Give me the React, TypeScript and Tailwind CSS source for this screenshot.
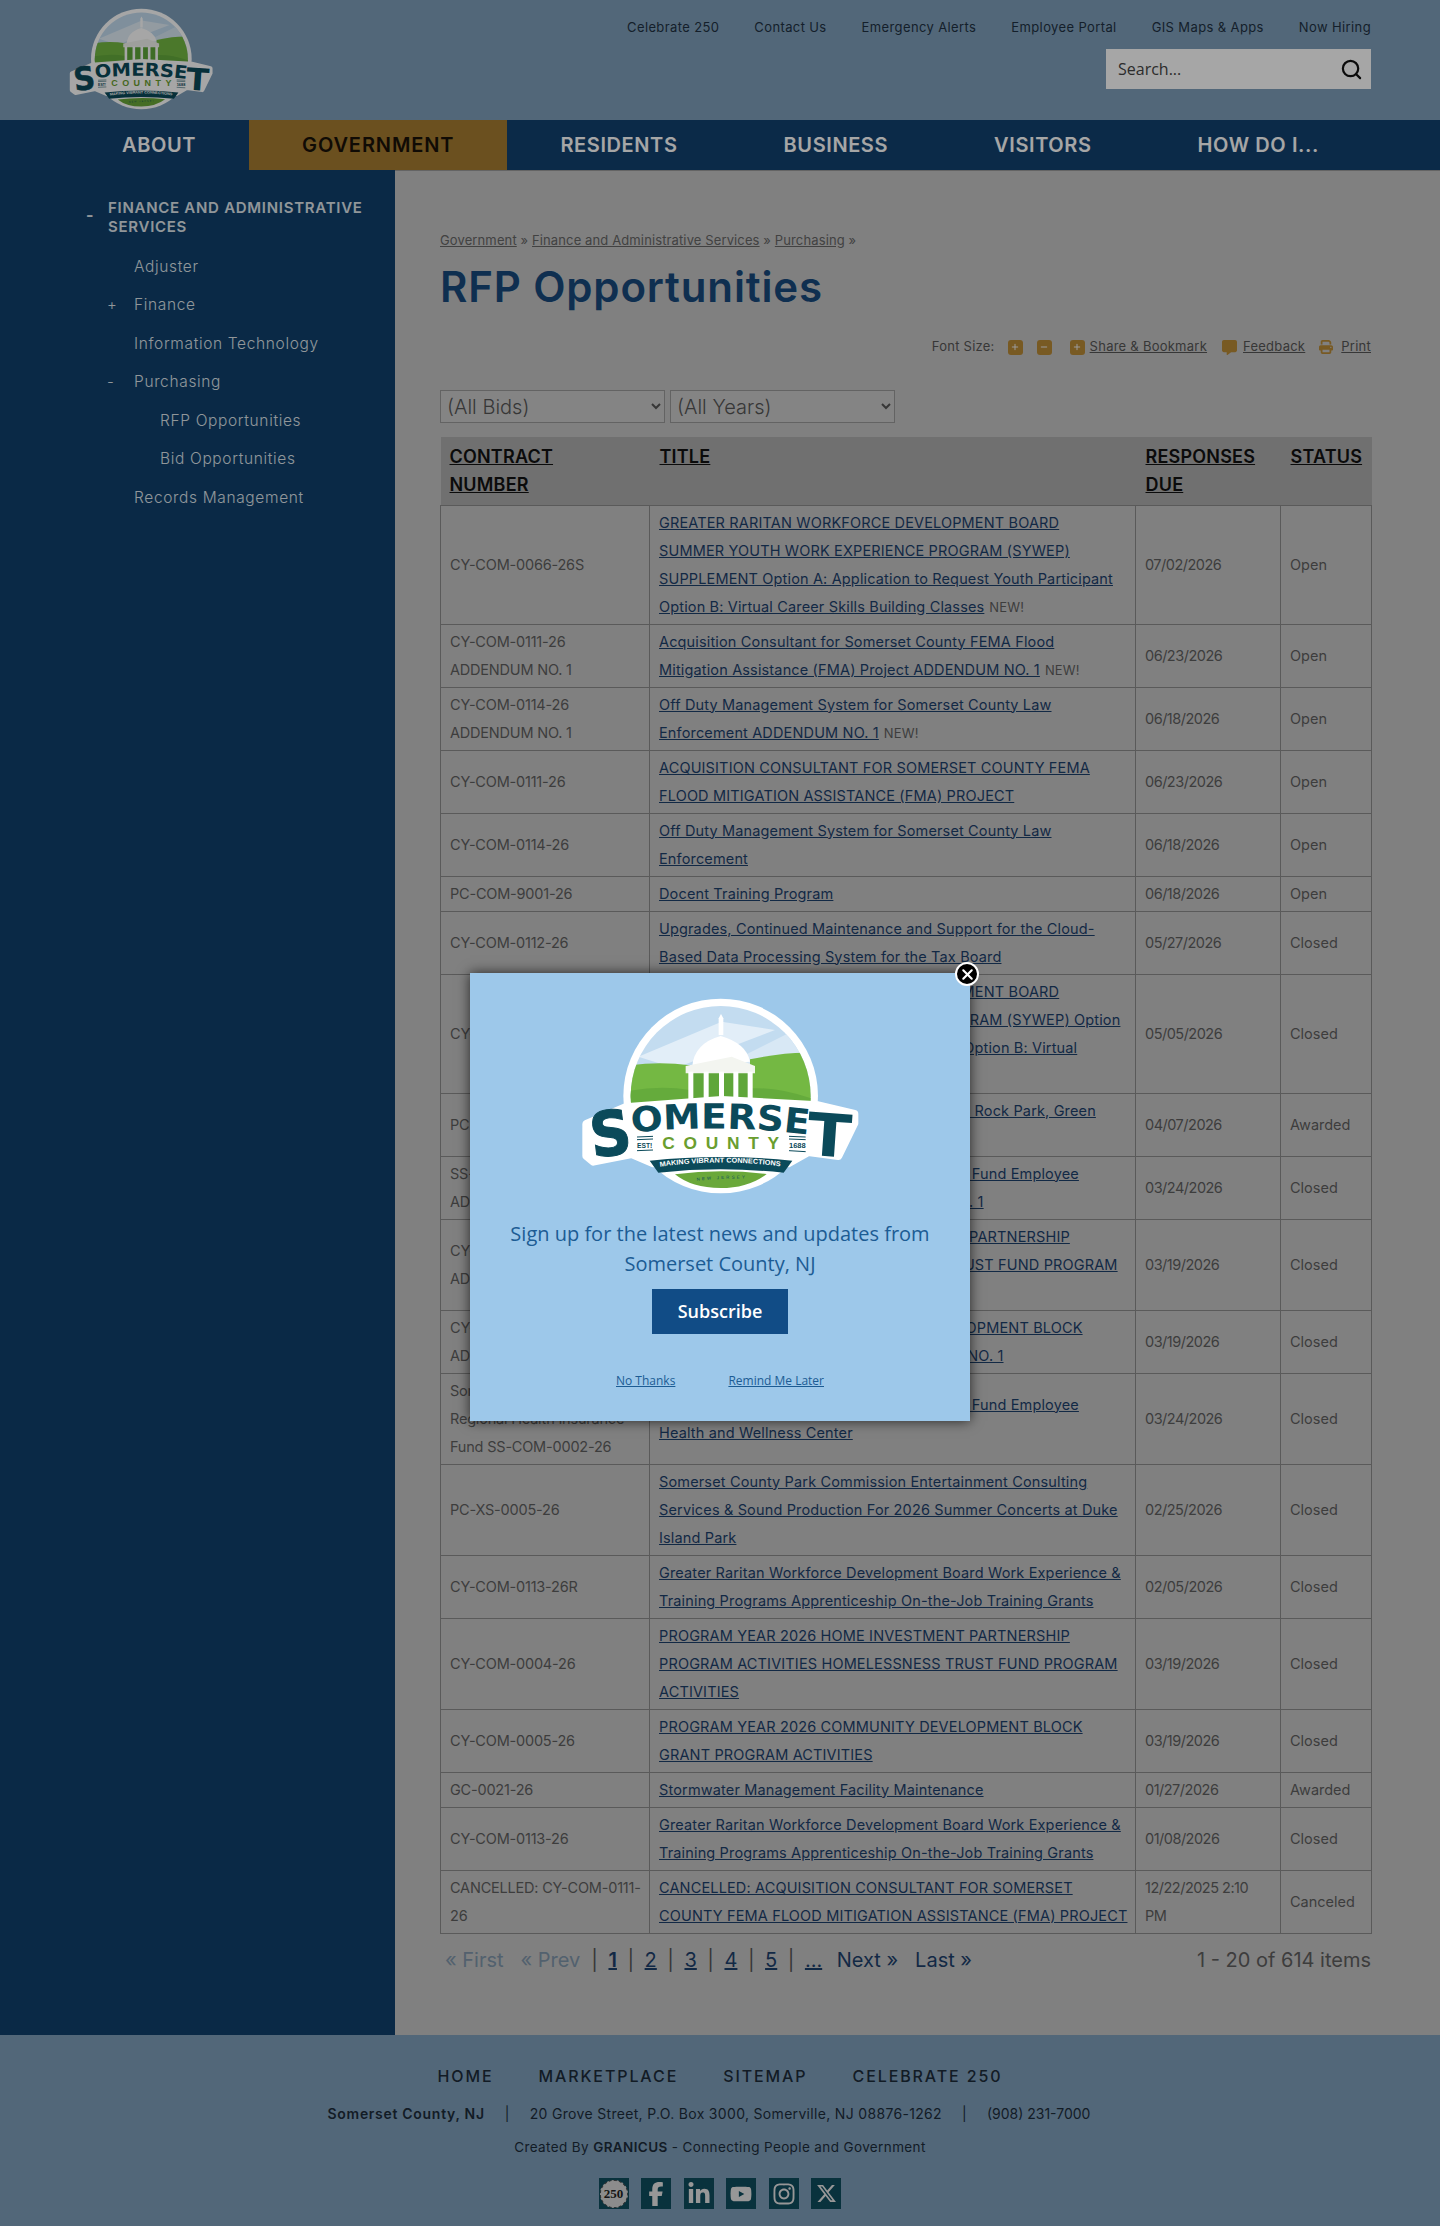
import { FaFacebookF, FaLinkedinIn, FaYoutube, FaInstagram, FaXTwitter, FaPrint, FaMessage, FaPlus, FaMinus, FaXmark } from "react-icons/fa6";
import { Search } from "lucide-react";

type Row = { id: string[]; title: string[]; isNew?: boolean; due: string[]; status: string };

const rows: Row[] = [
  { id: ["CY-COM-0066-26S"], title: ["GREATER RARITAN WORKFORCE DEVELOPMENT BOARD", "SUMMER YOUTH WORK EXPERIENCE PROGRAM (SYWEP)", "SUPPLEMENT Option A: Application to Request Youth Participant", "Option B: Virtual Career Skills Building Classes"], isNew: true, due: ["07/02/2026"], status: "Open" },
  { id: ["CY-COM-0111-26", "ADDENDUM NO. 1"], title: ["Acquisition Consultant for Somerset County FEMA Flood", "Mitigation Assistance (FMA) Project ADDENDUM NO. 1"], isNew: true, due: ["06/23/2026"], status: "Open" },
  { id: ["CY-COM-0114-26", "ADDENDUM NO. 1"], title: ["Off Duty Management System for Somerset County Law", "Enforcement ADDENDUM NO. 1"], isNew: true, due: ["06/18/2026"], status: "Open" },
  { id: ["CY-COM-0111-26"], title: ["ACQUISITION CONSULTANT FOR SOMERSET COUNTY FEMA", "FLOOD MITIGATION ASSISTANCE (FMA) PROJECT"], due: ["06/23/2026"], status: "Open" },
  { id: ["CY-COM-0114-26"], title: ["Off Duty Management System for Somerset County Law", "Enforcement"], due: ["06/18/2026"], status: "Open" },
  { id: ["PC-COM-9001-26"], title: ["Docent Training Program"], due: ["06/18/2026"], status: "Open" },
  { id: ["CY-COM-0112-26"], title: ["Upgrades, Continued Maintenance and Support for the Cloud-", "Based Data Processing System for the Tax Board"], due: ["05/27/2026"], status: "Closed" },
  { id: ["CY-COM-0066-26"], title: ["GREATER RARITAN WORKFORCE DEVELOPMENT BOARD", "SUMMER YOUTH WORK EXPERIENCE PROGRAM (SYWEP) Option", "A: Application to Request Youth Participant Option B: Virtual", "Career Skills Building Classes"], due: ["05/05/2026"], status: "Closed" },
  { id: ["PC-COM-0003-26"], title: ["Engineering Design Services for Washington Rock Park, Green", "Brook Improvements"], due: ["04/07/2026"], status: "Awarded" },
  { id: ["SS-COM-0002-26", "ADDENDUM NO. 1"], title: ["Somerset County Regional Health Insurance Fund Employee", "Health and Wellness Center ADDENDUM NO. 1"], due: ["03/24/2026"], status: "Closed" },
  { id: ["CY-COM-0004-26", "ADDENDUM NO. 1"], title: ["PROGRAM YEAR 2026 HOME INVESTMENT PARTNERSHIP", "PROGRAM ACTIVITIES HOMELESSNESS TRUST FUND PROGRAM", "ACTIVITIES ADDENDUM NO. 1"], due: ["03/19/2026"], status: "Closed" },
  { id: ["CY-COM-0005-26", "ADDENDUM NO. 1"], title: ["PROGRAM YEAR 2026 COMMUNITY DEVELOPMENT BLOCK", "GRANT PROGRAM ACTIVITIES ADDENDUM NO. 1"], due: ["03/19/2026"], status: "Closed" },
  { id: ["Somerset County", "Regional Health Insurance", "Fund SS-COM-0002-26"], title: ["Somerset County Regional Health Insurance Fund Employee", "Health and Wellness Center"], due: ["03/24/2026"], status: "Closed" },
  { id: ["PC-XS-0005-26"], title: ["Somerset County Park Commission Entertainment Consulting", "Services & Sound Production For 2026 Summer Concerts at Duke", "Island Park"], due: ["02/25/2026"], status: "Closed" },
  { id: ["CY-COM-0113-26R"], title: ["Greater Raritan Workforce Development Board Work Experience &", "Training Programs Apprenticeship On-the-Job Training Grants"], due: ["02/05/2026"], status: "Closed" },
  { id: ["CY-COM-0004-26"], title: ["PROGRAM YEAR 2026 HOME INVESTMENT PARTNERSHIP", "PROGRAM ACTIVITIES HOMELESSNESS TRUST FUND PROGRAM", "ACTIVITIES"], due: ["03/19/2026"], status: "Closed" },
  { id: ["CY-COM-0005-26"], title: ["PROGRAM YEAR 2026 COMMUNITY DEVELOPMENT BLOCK", "GRANT PROGRAM ACTIVITIES"], due: ["03/19/2026"], status: "Closed" },
  { id: ["GC-0021-26"], title: ["Stormwater Management Facility Maintenance"], due: ["01/27/2026"], status: "Awarded" },
  { id: ["CY-COM-0113-26"], title: ["Greater Raritan Workforce Development Board Work Experience &", "Training Programs Apprenticeship On-the-Job Training Grants"], due: ["01/08/2026"], status: "Closed" },
  { id: ["CANCELLED: CY-COM-0111-", "26"], title: ["CANCELLED: ACQUISITION CONSULTANT FOR SOMERSET", "COUNTY FEMA FLOOD MITIGATION ASSISTANCE (FMA) PROJECT"], due: ["12/22/2025 2:10", "PM"], status: "Canceled" },
];

const topLinks = ["Celebrate 250", "Contact Us", "Emergency Alerts", "Employee Portal", "GIS Maps & Apps", "Now Hiring"];
const navItems = ["ABOUT", "GOVERNMENT", "RESIDENTS", "BUSINESS", "VISITORS", "HOW DO I..."];

function Lines({ items }: { items: string[] }) {
  return (
    <>
      {items.map((t, i) => (
        <div key={i} className="whitespace-nowrap">{t}</div>
      ))}
    </>
  );
}

// county seal, drawn on the same grid for the header and the popup
function Logo({ prefix, className }: { prefix: string; className: string }) {
  const teal = "#0b4a5a";
  return (
    <svg viewBox="0 0 870 630" className={className}>
      <defs>
        <clipPath id={`${prefix}-c`}>
          <circle cx="437" cy="318" r="270" />
        </clipPath>
        <path id={`${prefix}-w`} d="M170 428 Q 435 400 702 434" />
        <path id={`${prefix}-b`} d="M255 530 Q 435 505 625 530" />
        <path id={`${prefix}-j`} d="M365 572 Q 435 565 515 566" />
      </defs>
      <circle cx="437" cy="318" r="292" fill="#fff" />
      <g clipPath={`url(#${prefix}-c)`}>
        <rect x="140" y="40" width="600" height="300" fill="#c3dcf0" />
        <path d="M190 200 L 440 95 L 600 120 L 300 235 Z" fill="#e2eef8" />
        <path d="M420 240 L 640 130 L 700 190 L 520 240 Z" fill="#d8e8f5" />
        <path d="M150 228 Q 250 212 345 226 L 345 340 L 150 340 Z" fill="#74b843" />
        <path d="M150 305 Q 250 285 345 300 L 345 340 L 150 340 Z" fill="#65ab3c" />
        <path d="M525 208 Q 620 188 690 188 L 735 340 L 525 340 Z" fill="#74b843" />
        <path d="M525 295 Q 620 290 735 335 L 525 340 Z" fill="#65ab3c" />
        <rect x="345" y="240" width="185" height="90" fill="#5fa63a" />
      </g>
      <path d="M431 135 L 431 85 L 438 72 L 445 85 L 445 135 Z" fill="#fff" />
      <path d="M352 228 Q 358 160 437 138 Q 515 160 525 215 Z" fill="#fff" />
      <path d="M332 228 L 470 200 L 540 228 L 540 250 L 332 250 Z" fill="#f3f5f0" />
      {[340, 386, 432, 475, 518].map((x) => (
        <rect key={x} x={x} y="245" width="15" height="85" fill="#fff" />
      ))}
      <path d="M34 402 L 150 352 L 440 330 L 730 346 L 838 372 L 838 400 L 790 498 L 700 486 L 640 520 L 235 520 L 170 492 L 55 515 L 34 498 Z" fill="#fff" stroke="#fff" strokeWidth="24" strokeLinejoin="round" />
      <text x="44" y="497" fontFamily="'DejaVu Sans', sans-serif" fontWeight="700" fontSize="186" fill={teal} stroke={teal} strokeWidth="3" textLength="124" lengthAdjust="spacingAndGlyphs" transform="rotate(-7 100 430)">S</text>
      <text fontFamily="'DejaVu Sans', sans-serif" fontWeight="700" fontSize="104" fill={teal}>
        <textPath href={`#${prefix}-w`} textLength="532" lengthAdjust="spacingAndGlyphs">OMERSE</textPath>
      </text>
      <text x="698" y="499" fontFamily="'DejaVu Sans', sans-serif" fontWeight="700" fontSize="178" fill={teal} textLength="132" lengthAdjust="spacingAndGlyphs" transform="rotate(4 760 430)">T</text>
      <text x="262" y="476" fontFamily="'Liberation Sans', sans-serif" fontWeight="700" fontSize="52" fill="#6a9e2f" textLength="350" lengthAdjust="spacing">COUNTY</text>
      <text x="186" y="473" fontFamily="'Liberation Sans', sans-serif" fontWeight="700" fontSize="24" fill={teal} textLength="46" lengthAdjust="spacingAndGlyphs">EST!</text>
      <text x="642" y="473" fontFamily="'Liberation Sans', sans-serif" fontWeight="700" fontSize="24" fill={teal} textLength="50" lengthAdjust="spacingAndGlyphs">1688</text>
      <path d="M186 441 L 234 439 M186 449 L 234 447 M186 482 L 234 480 M642 439 L 692 441 M642 447 L 692 449 M642 482 L 692 485" stroke={teal} strokeWidth="3" />
      <path d="M224 512 Q 435 490 652 512 L 626 548 Q 435 528 250 548 Z" fill={teal} />
      <text fontFamily="'Liberation Sans', sans-serif" fontWeight="700" fontSize="21" fill="#fff">
        <textPath href={`#${prefix}-b`} textLength="362" lengthAdjust="spacingAndGlyphs">MAKING VIBRANT CONNECTIONS</textPath>
      </text>
      <path d="M300 553 Q 435 535 575 552 Q 520 594 437 594 Q 350 594 300 553 Z" fill="#6aa83a" />
      <text fontFamily="'Liberation Sans', sans-serif" fontSize="13" fill={teal}>
        <textPath href={`#${prefix}-j`} textLength="145" lengthAdjust="spacing">NEW JERSEY</textPath>
      </text>
    </svg>
  );
}

function GoldBox({ minus }: { minus?: boolean }) {
  return (
    <span className="flex w-[15px] h-[15px] items-center justify-center rounded-[3px] bg-[#b98a36] text-[#eeeeee]">
      {minus ? <FaMinus size={8} /> : <FaPlus size={8} />}
    </span>
  );
}

function SocialBox({ children }: { children: React.ReactNode }) {
  return <span className="flex w-[30px] h-[31px] items-center justify-center bg-[#0f4d5f] text-[#e8e8e8]">{children}</span>;
}

function SideLink({ label, sign, deep }: { label: string; sign?: string; deep?: boolean }) {
  return (
    <div className={`relative flex h-[38.5px] items-center text-[15.5px] font-light tracking-[0.65px] text-[#dfe6ec] ${deep ? "pl-[160px]" : "pl-[134px]"}`}>
      {sign && <span className="absolute left-[107px] text-[15px]">{sign}</span>}
      {label}
    </div>
  );
}

export default function App() {
  return (
    <div className="relative h-[2226px] w-full overflow-hidden bg-[#c5c5c5] font-['Inter',sans-serif] text-[#5f5f5f]">
      {/* 头部 */}
      <header className="relative flex h-[120px] justify-end bg-[#7e9fba] pr-[69px]">
        <div className="absolute left-[66px] top-[4px]">
          <Logo prefix="head" className="w-[150px] h-[109px]" />
        </div>
        <div className="flex flex-col items-end">
          <div className="flex h-[49px] items-start gap-[35px] pt-[19px] text-[13px] leading-[16px] tracking-[0.38px] text-[#1f3142]">
            {topLinks.map((l) => (
              <span key={l}>{l}</span>
            ))}
          </div>
          <div className="flex h-[40px] w-[265px] items-center justify-between bg-white pl-[12px] pr-[8px] font-['Open_Sans',sans-serif] text-[16px] text-[#444]">
            <span>Search...</span>
            <Search size={23} strokeWidth={2.3} className="text-[#111]" />
          </div>
        </div>
      </header>

      <nav className="flex h-[50px] bg-[#11416f] pl-[69px]">
        {navItems.map((n) => (
          <div
            key={n}
            className={`flex items-center px-[53px] text-[20px] font-semibold ${n === "GOVERNMENT" ? "bg-[#a57b31] tracking-[0.9px] text-[#1a1208]" : "tracking-[0.6px] text-white"}`}
          >
            {n}
          </div>
        ))}
      </nav>

      <div className="flex h-[1865px]">
        <aside className="w-[395px] shrink-0 bg-[#103f6c] pt-[29px]">
          <div className="relative mb-[11px] pl-[108px] pr-[20px] text-[15px] font-semibold leading-[18.5px] tracking-[0.72px] text-[#dfe6ec]">
            <span className="absolute left-[86px] top-[7px] text-[16px] font-bold">-</span>
            FINANCE AND ADMINISTRATIVE
            <br />
            SERVICES
          </div>
          <SideLink label="Adjuster" />
          <SideLink label="Finance" sign="+" />
          <SideLink label="Information Technology" />
          <SideLink label="Purchasing" sign="-" />
          <SideLink label="RFP Opportunities" deep />
          <SideLink label="Bid Opportunities" deep />
          <SideLink label="Records Management" />
        </aside>

        <main className="min-w-0 flex-1 border-t border-[#9a9a9a] pl-[45px] pr-[69px] pt-[61px]">
          <div className="text-[13px] leading-[16px] tracking-[0.12px] text-[#666]">
            <span className="underline">Government</span> » <span className="underline">Finance and Administrative Services</span> »{" "}
            <span className="underline">Purchasing</span> »
          </div>
          <h1 className="mt-[15px] text-[42px] font-semibold leading-[48px] tracking-[0.85px] text-[#17497c]">RFP Opportunities</h1>

          <div className="mt-[28px] flex h-[16px] items-center justify-end text-[13px] tracking-[0.25px] text-[#555]">
            <span className="mr-[13px]">Font Size:</span>
            <GoldBox />
            <span className="w-[14px]" />
            <GoldBox minus />
            <span className="w-[18px]" />
            <GoldBox />
            <span className="ml-[5px] mr-[15px] underline">Share & Bookmark</span>
            <FaMessage size={15} className="text-[#b98a36]" />
            <span className="ml-[6px] mr-[14px] underline">Feedback</span>
            <FaPrint size={14} className="text-[#b98a36]" />
            <span className="ml-[8px] underline">Print</span>
          </div>

          <div className="mt-[35px] flex gap-[5px]">
            <select className="h-[33px] w-[225px] border border-[#999] bg-[#cbcbcb] pl-[2px] text-[20px] font-light text-[#555]">
              <option>(All Bids)</option>
            </select>
            <select className="h-[33px] w-[225px] border border-[#999] bg-[#cbcbcb] pl-[2px] text-[20px] font-light text-[#555]">
              <option>(All Years)</option>
            </select>
          </div>

          <table className="mt-[14px] w-[931px] table-fixed border-collapse text-[14.5px] leading-[28px]">
            <colgroup>
              <col className="w-[209px]" />
              <col className="w-[486px]" />
              <col className="w-[145px]" />
              <col className="w-[91px]" />
            </colgroup>
            <thead>
              <tr className="h-[68px] bg-[#acacac] text-left align-top text-[18px] font-semibold tracking-[0.2px] text-[#111]">
                <th className="px-[9px] pt-[6px] font-semibold"><span className="underline">CONTRACT<br />NUMBER</span></th>
                <th className="px-[10px] pt-[6px] font-semibold"><span className="underline">TITLE</span></th>
                <th className="px-[10px] pt-[6px] font-semibold"><span className="underline">RESPONSES<br />DUE</span></th>
                <th className="px-[10px] pt-[6px] font-semibold"><span className="underline">STATUS</span></th>
              </tr>
            </thead>
            <tbody>
              {rows.map((r, i) => (
                <tr key={i}>
                  <td className="border border-[#8a8a8a] px-[9px] py-[3px] tracking-[-0.2px]"><Lines items={r.id} /></td>
                  <td className="border border-[#8a8a8a] px-[9px] py-[3px] tracking-[0.15px] text-[#1d3f6b]">
                    {r.title.map((t, j) => (
                      <div key={j} className="whitespace-nowrap">
                        <span className="underline">{t}</span>
                        {r.isNew && j === r.title.length - 1 && <span className="ml-[5px] text-[13px] leading-none text-[#5f5f5f]">NEW!</span>}
                      </div>
                    ))}
                  </td>
                  <td className="border border-[#8a8a8a] px-[9px] py-[3px] tracking-[-0.5px]"><Lines items={r.due} /></td>
                  <td className="border border-[#8a8a8a] px-[9px] py-[3px]">{r.status}</td>
                </tr>
              ))}
            </tbody>
          </table>

          <div className="mt-[12px] flex h-[28px] items-center text-[20px] leading-[28px]">
            <div className="flex items-center pl-[5px] text-[#1d3f6b]">
              <span className="text-[#7f95aa]">« First</span>
              <span className="ml-[17px] mr-[11px] text-[#7f95aa]">« Prev</span>
              <span className="text-[#555]">|</span>
              <span className="mx-[10.5px] font-semibold underline">1</span>
              <span className="text-[#555]">|</span>
              <span className="mx-[10.5px] underline">2</span>
              <span className="text-[#555]">|</span>
              <span className="mx-[10.5px] underline">3</span>
              <span className="text-[#555]">|</span>
              <span className="mx-[10.5px] underline">4</span>
              <span className="text-[#555]">|</span>
              <span className="mx-[10.5px] underline">5</span>
              <span className="text-[#555]">|</span>
              <span className="mx-[10.5px] underline">...</span>
              <span className="ml-[4px]">Next »</span>
              <span className="ml-[17px]">Last »</span>
            </div>
            <span className="ml-auto">1 - 20 of 614 items</span>
          </div>
        </main>
      </div>

      <footer className="flex h-[191px] flex-col items-center bg-[#7e9fba] text-[#1d2c3a]">
        <div className="mt-[31px] flex gap-[45px] text-[16px] font-medium leading-[20px] tracking-[1.9px]">
          <span>HOME</span>
          <span>MARKETPLACE</span>
          <span>SITEMAP</span>
          <span>CELEBRATE 250</span>
        </div>
        <div className="mr-[22px] mt-[19px] flex text-[14px] leading-[18px] tracking-[0.32px]">
          <span className="font-semibold tracking-[0.7px]">Somerset County, NJ</span>
          <span className="mx-[20px]">|</span>
          <span>20 Grove Street, P.O. Box 3000, Somerville, NJ 08876-1262</span>
          <span className="mx-[20px]">|</span>
          <span className="tracking-[0px]">(908) 231-7000</span>
        </div>
        <div className="mt-[16px] text-[13.5px] leading-[16px] tracking-[0.38px]">
          Created By <span className="font-semibold">GRANICUS</span> - Connecting People and Government
        </div>
        <div className="mt-[23px] flex gap-[12.6px]">
          <SocialBox>
            <span className="flex h-[28px] w-[28px] items-center justify-center rounded-full border border-dashed border-[#555] bg-[#d8d8d8] font-['Liberation_Serif',serif] text-[13px] font-bold text-[#222]">250</span>
          </SocialBox>
          <SocialBox><FaFacebookF size={24} /></SocialBox>
          <SocialBox><FaLinkedinIn size={24} /></SocialBox>
          <SocialBox><FaYoutube size={22} /></SocialBox>
          <SocialBox><FaInstagram size={24} /></SocialBox>
          <SocialBox><FaXTwitter size={21} /></SocialBox>
        </div>
      </footer>

      {/* 弹窗遮罩 */}
      <div className="absolute inset-0 bg-black/35" />
      <div className="absolute left-[470px] top-[973px] flex h-[448px] w-[500px] flex-col items-center bg-[#9dc8ea] shadow-[0_0_12px_rgba(0,0,0,0.7)] font-['Open_Sans',sans-serif]">
        <Logo prefix="pop" className="mt-[17px] h-[210px] w-[290px]" />
        <p className="mt-[19px] text-center text-[20px] leading-[30px] text-[#1c5c94]">
          Sign up for the latest news and updates from
          <br />
          Somerset County, NJ
        </p>
        <button className="mt-[10px] h-[45px] w-[136px] bg-[#114c86] text-[18px] font-semibold text-white">Subscribe</button>
        <div className="mt-[39px] flex gap-[53px] text-[12px] leading-[16px] text-[#1c5c94] underline">
          <span>No Thanks</span>
          <span>Remind Me Later</span>
        </div>
        <span className="absolute -right-[9px] -top-[11px] flex h-[24px] w-[24px] items-center justify-center rounded-full border-2 border-white bg-black text-white">
          <FaXmark size={17} />
        </span>
      </div>
    </div>
  );
}
